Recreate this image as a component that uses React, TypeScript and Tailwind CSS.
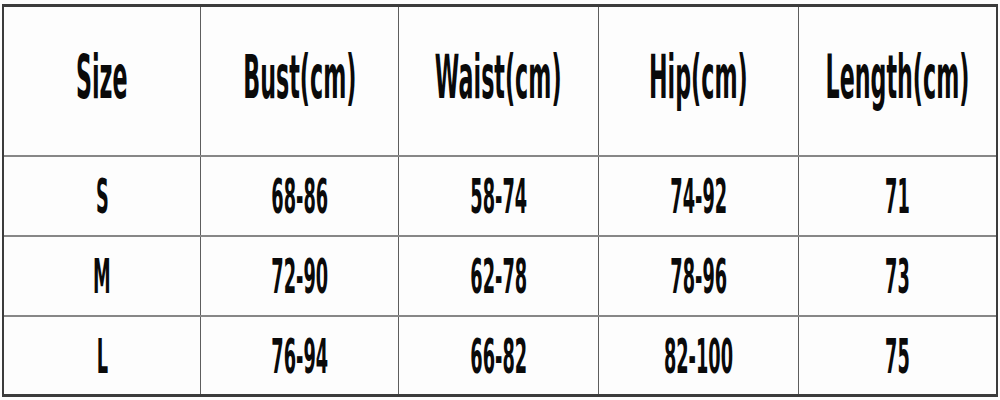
import React from "react";

const header = ["Size", "Bust(cm)", "Waist(cm)", "Hip(cm)", "Length(cm)"];
const rows = [
  ["S", "68-86", "58-74", "74-92", "71"],
  ["M", "72-90", "62-78", "78-96", "73"],
  ["L", "76-94", "66-82", "82-100", "75"],
];
const widths = ["w-[196px]", "w-[198px]", "w-[200px]", "w-[200px]", "w-[198px]"];

function Cell({ text, i, big }: { text: string; i: number; big?: boolean }) {
  return (
    <div
      className={`${widths[i]} shrink-0 h-full flex items-center justify-center overflow-visible ${
        i > 0 ? "border-l border-[#5e5e5e]" : ""
      } ${big ? "pb-[8px]" : ""}`}
    >
      <span
        className={`inline-block shrink-0 whitespace-nowrap scale-x-[0.37] font-bold text-[#0a0a0a] leading-none font-['DejaVu_Sans',sans-serif] ${
          big ? "text-[60px]" : "text-[48px]"
        }`}
      >
        {text}
      </span>
    </div>
  );
}

export default function App() {
  return (
    <div className="w-[1000px] h-[400px] bg-[#fdfdfd] pt-[4px] pl-[2px] overflow-hidden">
      <div className="w-[996px] border-t-[3px] border-b-[3px] border-l-2 border-r-2 border-[#3c3c3c] overflow-hidden">
        <div className="flex h-[148px]">
          {header.map((h, i) => (
            <Cell key={h} text={h} i={i} big />
          ))}
        </div>
        {rows.map((r, ri) => (
          <div
            key={ri}
            className={`flex border-t-2 border-[#878787] ${ri === 2 ? "h-[79px]" : "h-[80px]"}`}
          >
            {r.map((c, i) => (
              <Cell key={i} text={c} i={i} />
            ))}
          </div>
        ))}
      </div>
    </div>
  );
}
